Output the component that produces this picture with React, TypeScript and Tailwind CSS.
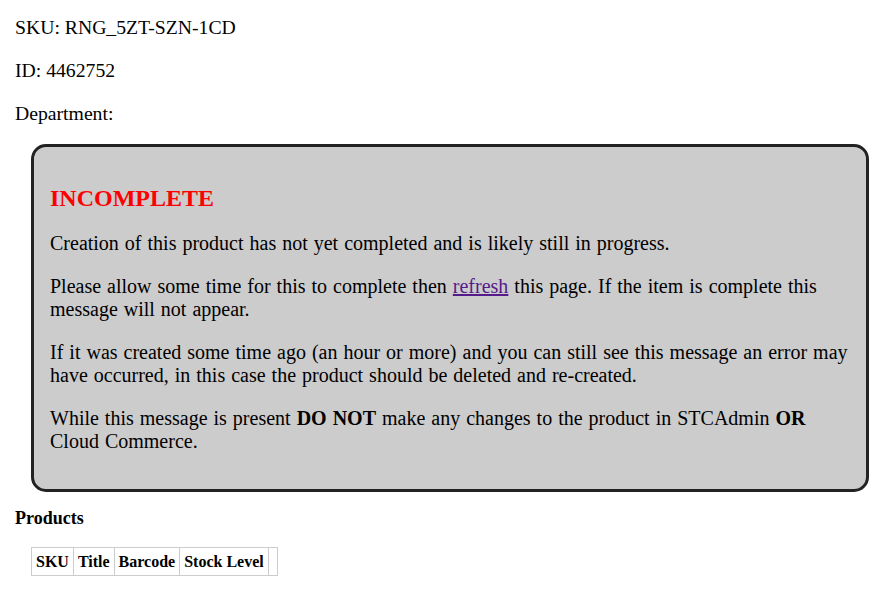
const App = () => {
  return (
    <div className="min-h-[600px] bg-white px-[15px] py-px font-['Liberation_Serif',serif] text-[20px] leading-[23px] text-black">
      <p className="mt-[15px] mb-[20px] text-[19.7px]">SKU: RNG_5ZT-SZN-1CD</p>
      <p className="my-[20px] text-[19.7px]">ID: 4462752</p>
      <p className="mt-[20px] mb-[19px] text-[19.7px]">Department:</p>

      <div className="ml-[16px] mr-[10px] rounded-[15px] border-[3px] border-[#222] bg-[#ccc] px-[16px] pb-[16px] pt-[19px] [word-spacing:1px]">
        <h2 className="my-[18px] text-[24px] font-bold leading-[28px] text-[#f00]">INCOMPLETE</h2>
        <p className="my-[20px]">Creation of this product has not yet completed and is likely still in progress.</p>
        <p className="my-[20px]">
          Please allow some time for this to complete then{" "}
          <a href="#" className="text-[#551a8b] underline">
            refresh
          </a>{" "}
          this page. If the item is complete this message will not appear.
        </p>
        <p className="my-[20px]">
          If it was created some time ago (an hour or more) and you can still see this message an error may have
          occurred, in this case the product should be deleted and re-created.
        </p>
        <p className="my-[20px]">
          While this message is present <b>DO NOT</b> make any changes to the product in STCAdmin <b>OR</b> Cloud
          Commerce.
        </p>
      </div>

      <h3 className="mt-[15px] mb-[18px] text-[18px] font-bold leading-[22px]">Products</h3>

      <table className="ml-[16px] border-collapse border border-[#ccc] text-[16px] leading-[18px]">
        <thead>
          <tr>
            <th className="border border-[#ccc] px-[4px] pt-[5px] pb-[4px] font-bold">SKU</th>
            <th className="border border-[#ccc] px-[4px] pt-[5px] pb-[4px] font-bold">Title</th>
            <th className="border border-[#ccc] px-[4px] pt-[5px] pb-[4px] font-bold">Barcode</th>
            <th className="border border-[#ccc] px-[4px] pt-[5px] pb-[4px] font-bold">Stock Level</th>
            <th className="w-[9px] border border-[#ccc]"></th>
          </tr>
        </thead>
      </table>
    </div>
  );
};

export default App;
